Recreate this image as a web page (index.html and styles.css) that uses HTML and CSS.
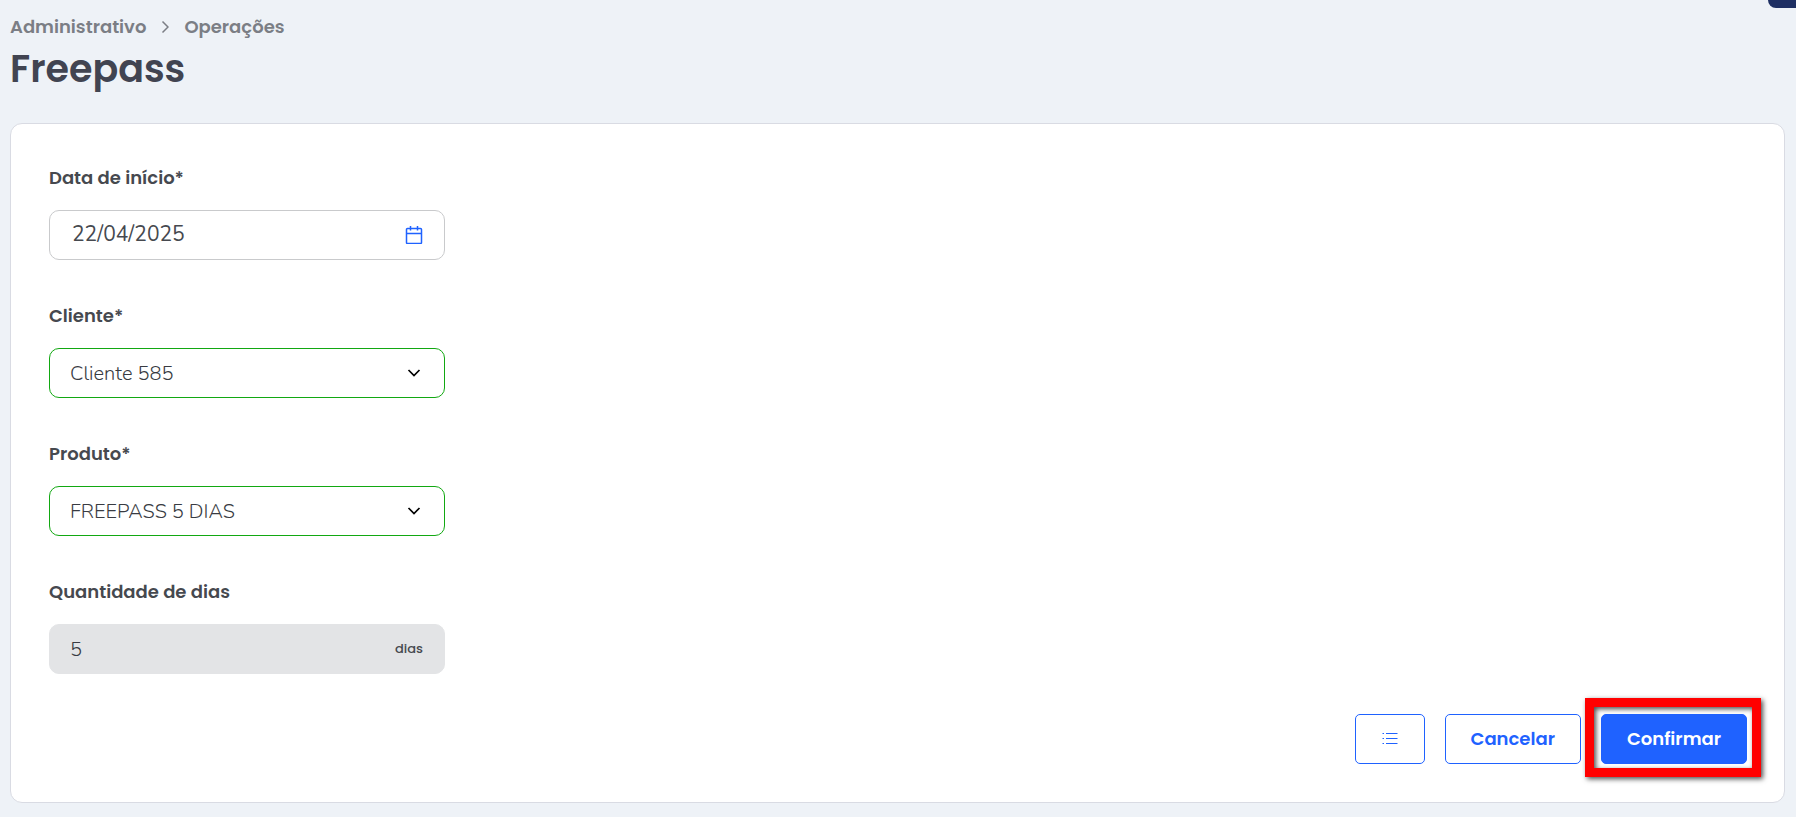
FILE: index.html
```html
<!DOCTYPE html>
<html lang="pt-BR">
<head>
<meta charset="utf-8">
<meta name="viewport" content="width=device-width, initial-scale=1">
<title>Freepass</title>
<link rel="stylesheet" href="styles.css">
</head>
<body>
<div class="corner-tab"></div>
<header class="page-header">
  <nav class="breadcrumb" aria-label="Breadcrumb">
    <a href="#">Administrativo</a>
    <svg class="crumb-icon" viewBox="0 0 8 14" aria-hidden="true"><path d="M1.500 1.500L7 7l-5.500 5.500"/></svg>
    <a href="#">Operações</a>
  </nav>
  <h1 class="title">Freepass</h1>
</header>
<main>
  <form class="card">
    <div class="fields">
      <div class="field">
        <label class="label" for="inicio">Data de início*</label>
        <div class="control">
          <input class="input input-date" id="inicio" type="text" value="22/04/2025">
          <button class="picker" type="button" aria-label="Abrir calendário">
            <svg class="calendar-icon" viewBox="0 0 18 18" aria-hidden="true"><path d="M2.500 2.500h13a1 1 0 0 1 1 1v13a1 1 0 0 1-1 1h-13a1 1 0 0 1-1-1v-13a1 1 0 0 1 1-1zM1.500 7.500h15M5.500 0v4.500M12.500 0v4.500"/></svg>
          </button>
        </div>
      </div>
      <div class="field">
        <label class="label" for="cliente">Cliente*</label>
        <div class="control">
          <select class="input valid" id="cliente"><option>Cliente 585</option></select>
          <svg class="chevron" viewBox="0 0 14 8" aria-hidden="true"><path d="M1.500 1l5.500 5.500L12.500 1"/></svg>
        </div>
      </div>
      <div class="field">
        <label class="label" for="produto">Produto*</label>
        <div class="control">
          <select class="input valid" id="produto"><option>FREEPASS 5 DIAS</option></select>
          <svg class="chevron" viewBox="0 0 14 8" aria-hidden="true"><path d="M1.500 1l5.500 5.500L12.500 1"/></svg>
        </div>
      </div>
      <div class="field">
        <label class="label" for="dias">Quantidade de dias</label>
        <div class="control">
          <input class="input" id="dias" type="text" value="5" disabled>
          <span class="suffix">dias</span>
        </div>
      </div>
    </div>
    <div class="actions">
      <button class="button icon-button" type="button" aria-label="Listar">
        <svg class="list-icon" viewBox="0 0 16 12" aria-hidden="true"><path d="M4 .5h11.500M4 5.500h11.500M4 10.500h11.500M.5 .5h1.500M.5 5.500h1.500M.5 10.500h1.500"/></svg>
      </button>
      <button class="button" type="button">Cancelar</button>
      <div class="highlighted">
        <button class="button primary" type="submit">Confirmar</button>
        <div class="highlight"></div>
      </div>
    </div>
  </form>
</main>
</body>
</html>
```
FILE: styles.css
```css
* { box-sizing: border-box; }

body {
  margin: 0;
  padding: 15px 11px 15px 10px;
  background: #eef2f7;
  color: #46494f;
  font-family: Poppins, Inter, sans-serif;
}

svg {
  display: block;
  fill: none;
  stroke: currentColor;
}

.corner-tab {
  position: absolute;
  top: 0;
  right: 0;
  width: 28px;
  height: 8px;
  border-bottom-left-radius: 8px;
  background: #1e2f63;
}

.breadcrumb {
  display: flex;
  align-items: center;
  gap: 15px;
  color: #7b7e85;
  font-size: 18px;
  font-weight: 600;
  line-height: 24px;
}

.breadcrumb a {
  color: inherit;
  text-decoration: none;
}

.crumb-icon {
  width: 8px;
  height: 14px;
  stroke-width: 1.5;
}

.title {
  margin: 6px 0 30px;
  color: #414451;
  font-size: 38px;
  font-weight: 600;
  line-height: 48px;
}

.card {
  padding: 40px 37px 38px 38px;
  border: 1px solid #d9dbe3;
  border-radius: 12px;
  background: #fff;
}

.fields {
  display: grid;
  gap: 42px;
  max-width: 396px;
}

.field {
  display: grid;
  gap: 18px;
}

.label {
  font-size: 18px;
  font-weight: 600;
  line-height: 28px;
}

.control {
  position: relative;
}

.input {
  display: block;
  width: 100%;
  height: 50px;
  margin: 0;
  padding: 0 56px 0 20px;
  appearance: none;
  border: 1px solid #c9cacc;
  border-radius: 10px;
  background: #fff;
  color: #383b42;
  font-family: Nunito, Lato, sans-serif;
  font-size: 20px;
  font-weight: 300;
}

.input-date {
  padding-left: 22px;
  padding-bottom: 2px;
  color: #46494f;
  font-size: 21px;
  font-weight: 400;
}

.input.valid {
  border-color: #12a812;
}

.input:disabled {
  border-color: #e3e4e6;
  background: #e3e4e6;
  opacity: 1;
}

.picker,
.chevron,
.suffix {
  position: absolute;
  top: 50%;
  right: 22px;
  transform: translateY(-50%);
}

.picker {
  padding: 0;
  border: 0;
  background: none;
  color: #1f62ff;
}

.calendar-icon {
  width: 18px;
  height: 18px;
  stroke-width: 1.5;
}

.chevron {
  right: 24px;
  width: 14px;
  height: 8px;
  color: #000;
  stroke-width: 1.7;
  pointer-events: none;
}

.suffix {
  font-size: 13px;
  font-weight: 500;
  line-height: 20px;
}

.actions {
  display: flex;
  justify-content: flex-end;
  gap: 20px;
  margin-top: 40px;
}

.button {
  height: 50px;
  padding: 0 25px 2px;
  border: 1px solid #1f62ff;
  border-radius: 5px;
  background: #fff;
  color: #1f62ff;
  font-family: inherit;
  font-size: 18px;
  font-weight: 600;
}

.icon-button {
  padding: 0 26px;
}

.primary {
  background: #1f62ff;
  color: #fff;
}

.list-icon {
  width: 16px;
  height: 12px;
}

.highlighted {
  position: relative;
}

.highlight {
  position: absolute;
  inset: -16px -14px -13px -16px;
  border: 9px solid #f00;
  box-shadow: 2px 2px 5px rgb(0 0 0 / 70%), inset 2px 2px 5px rgb(0 0 0 / 70%);
  pointer-events: none;
}
```
